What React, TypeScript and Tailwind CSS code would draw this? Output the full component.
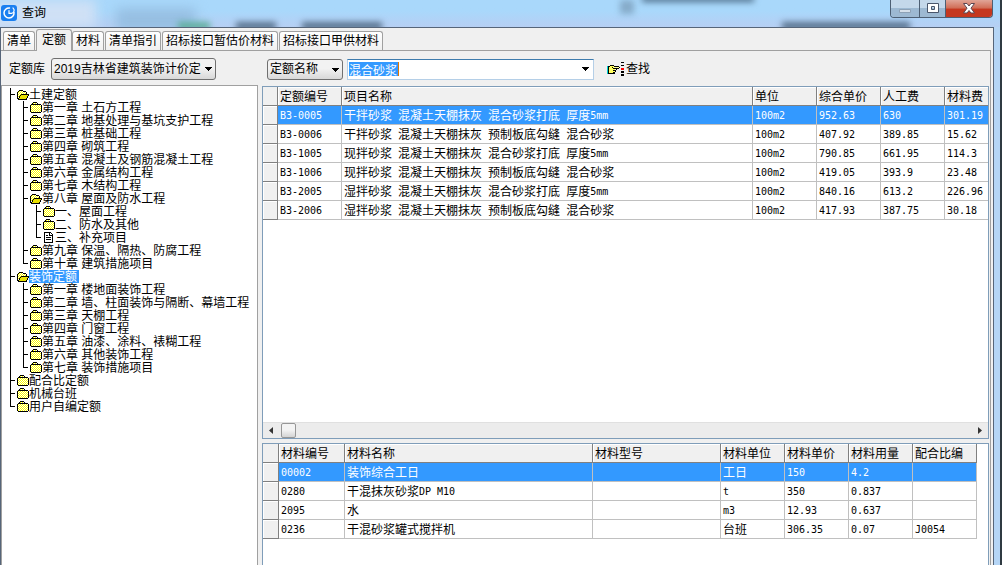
import React, { useState } from "react";

type Guide = "tee" | "elbow" | "bar";
type IconKind = "closed" | "open" | "page";
type Node = { guides: Guide[]; icon: IconKind; label: string; selected?: boolean };

const T: Guide = "tee";
const E: Guide = "elbow";
const B: Guide = "bar";

const nodes: Node[] = [
  { guides: [T], icon: "open", label: "土建定额" },
  { guides: [B, T], icon: "closed", label: "第一章 土石方工程" },
  { guides: [B, T], icon: "closed", label: "第二章 地基处理与基坑支护工程" },
  { guides: [B, T], icon: "closed", label: "第三章 桩基础工程" },
  { guides: [B, T], icon: "closed", label: "第四章 砌筑工程" },
  { guides: [B, T], icon: "closed", label: "第五章 混凝土及钢筋混凝土工程" },
  { guides: [B, T], icon: "closed", label: "第六章 金属结构工程" },
  { guides: [B, T], icon: "closed", label: "第七章 木结构工程" },
  { guides: [B, T], icon: "open", label: "第八章 屋面及防水工程" },
  { guides: [B, B, T], icon: "closed", label: "一、屋面工程" },
  { guides: [B, B, T], icon: "closed", label: "二、防水及其他" },
  { guides: [B, B, E], icon: "page", label: "三、补充项目" },
  { guides: [B, T], icon: "closed", label: "第九章 保温、隔热、防腐工程" },
  { guides: [B, E], icon: "closed", label: "第十章 建筑措施项目" },
  { guides: [T], icon: "open", label: "装饰定额", selected: true },
  { guides: [B, T], icon: "closed", label: "第一章 楼地面装饰工程" },
  { guides: [B, T], icon: "closed", label: "第二章 墙、柱面装饰与隔断、幕墙工程" },
  { guides: [B, T], icon: "closed", label: "第三章 天棚工程" },
  { guides: [B, T], icon: "closed", label: "第四章 门窗工程" },
  { guides: [B, T], icon: "closed", label: "第五章 油漆、涂料、裱糊工程" },
  { guides: [B, T], icon: "closed", label: "第六章 其他装饰工程" },
  { guides: [B, E], icon: "closed", label: "第七章 装饰措施项目" },
  { guides: [T], icon: "closed", label: "配合比定额" },
  { guides: [T], icon: "closed", label: "机械台班" },
  { guides: [E], icon: "closed", label: "用户自编定额" },
];

const quotas = [
  ["B3-0005", "干拌砂浆 混凝土天棚抹灰 混合砂浆打底 厚度5mm", "100m2", "952.63", "630", "301.19"],
  ["B3-0006", "干拌砂浆 混凝土天棚抹灰 预制板底勾缝 混合砂浆", "100m2", "407.92", "389.85", "15.62"],
  ["B3-1005", "现拌砂浆 混凝土天棚抹灰 混合砂浆打底 厚度5mm", "100m2", "790.85", "661.95", "114.3"],
  ["B3-1006", "现拌砂浆 混凝土天棚抹灰 预制板底勾缝 混合砂浆", "100m2", "419.05", "393.9", "23.48"],
  ["B3-2005", "湿拌砂浆 混凝土天棚抹灰 混合砂浆打底 厚度5mm", "100m2", "840.16", "613.2", "226.96"],
  ["B3-2006", "湿拌砂浆 混凝土天棚抹灰 预制板底勾缝 混合砂浆", "100m2", "417.93", "387.75", "30.18"],
];

const materials = [
  ["00002", "装饰综合工日", "", "工日", "150", "4.2", ""],
  ["0280", "干混抹灰砂浆DP M10", "", "t", "350", "0.837", ""],
  ["2095", "水", "", "m3", "12.93", "0.637", ""],
  ["0236", "干混砂浆罐式搅拌机", "", "台班", "306.35", "0.07", "J0054"],
];

const tabs = ["清单", "定额", "材料", "清单指引", "招标接口暂估价材料", "招标接口甲供材料"];

function GuideCell({ kind }: { kind: Guide }) {
  const d = {
    tee: "M6 0h1v13h-1zM6 6h5v1h-5z",
    elbow: "M6 0h1v7h-1zM6 6h5v1h-5z",
    bar: "M6 0h1v13h-1z",
  }[kind];
  return (
    <svg className="h-[13px] w-[13px] shrink-0" viewBox="0 0 13 13" shapeRendering="crispEdges" aria-hidden="true">
      <path d={d} fill="#000" />
    </svg>
  );
}

function TreeIcon({ kind }: { kind: IconKind }) {
  return (
    <svg className="h-[13px] w-3 shrink-0" viewBox="0 0 12 13" shapeRendering="crispEdges" aria-hidden="true">
      {kind === "closed" && (
        <>
          <path d="M1 4h10v7H1zM3 2h4v2H3z" fill="url(#dither)" />
          <path d="M3 1h4v1H3zM2 2h1v1H2zM7 2h1v1H7zM1 3h10v1H1zM0 4h1v7H0zM1 11h10v1H1zM11 4h1v7h-1z" fill="#000" />
        </>
      )}
      {kind === "open" && (
        <>
          <path d="M1 3h8v8H1z" fill="url(#dither)" />
          <path d="M4 6h8v1h-1v2h-1v2H2V9h1V8h1z" fill="#e8e000" />
          <path d="M2 2h4v1H2zM1 3h1v1H1zM6 3h3v1H6zM0 4h1v7H0zM9 4h1v2H9zM4 6h8v1H4zM3 7h1v1H3zM11 7h1v1h-1zM2 8h1v2H2zM10 8h1v2h-1zM1 10h1v1H1zM9 10h1v1H9zM1 11h9v1H1z" fill="#000" />
        </>
      )}
      {kind === "page" && (
        <path d="M2 1h5v1H2zM1 1h1v11H1zM1 11h9v1H1zM9 4h1v8H9zM7 1h1v1H7zM8 2h1v1H8zM9 3h1v1H9zM6 2h1v3H6zM6 4h3v1H6zM3 4h2v1H3zM3 6h5v1H3zM3 8h5v1H3z" fill="#000" />
      )}
    </svg>
  );
}

function DownArrow() {
  return (
    <svg className="h-1 w-[7px]" viewBox="0 0 7 4" shapeRendering="crispEdges" aria-hidden="true">
      <path d="M0 0h7v1H0zM1 1h5v1H1zM2 2h3v1H2zM3 3h1v1H3z" fill="#000" />
    </svg>
  );
}

/* Half-width runs are set in a monospaced face, half as wide as the Chinese characters. */
function Mixed({ text }: { text: string }) {
  return (
    <>
      {text.split(/([\x20-\x7e]+)/).map((part, i) =>
        i % 2 ? (
          <span key={i} className="align-[1px] font-['DejaVu_Sans_Mono',monospace] text-[10px] leading-[12px] whitespace-pre">
            {part}
          </span>
        ) : (
          part
        ),
      )}
    </>
  );
}

function Grid({
  label,
  heads,
  rows,
  widths,
  clipped,
}: {
  label: string;
  heads: string[];
  rows: string[][];
  widths: string[];
  clipped?: boolean;
}) {
  const edge = clipped ? "last:border-r-0" : "";
  const [active, setActive] = useState(0);
  return (
    <table className="w-full table-fixed border-separate border-spacing-0 text-left" aria-label={label}>
      <colgroup>
        {widths.map((w, i) => (
          <col key={i} className={w} />
        ))}
      </colgroup>
      <thead>
        <tr className="h-[19px]">
          <td className="border-r border-b border-[#808080] bg-[#f0f0f0] p-0" />
          {heads.map((h) => (
            <th
              key={h}
              scope="col"
              className={`overflow-hidden border-r border-b border-[#808080] bg-[#f0f0f0] p-0 pt-[2px] pl-[2px] font-normal whitespace-nowrap shadow-[inset_1px_1px_0_#ffffff] ${edge}`}
            >
              {h}
            </th>
          ))}
        </tr>
      </thead>
      <tbody>
        {rows.map((r, i) => (
          <tr key={r[0]} className={`h-[19px] ${i === active ? "bg-[#3399ff] text-white" : "bg-white"}`} onClick={() => setActive(i)}>
            <td className="border-r border-b border-[#808080] bg-[#f0f0f0] p-0 shadow-[inset_1px_1px_0_#ffffff]" />
            {r.map((c, j) => (
              <td key={j} className={`overflow-hidden border-r border-b border-[#c0c0c0] p-0 pt-[2px] pl-[2px] whitespace-nowrap ${edge}`}>
                <Mixed text={c} />
              </td>
            ))}
          </tr>
        ))}
      </tbody>
    </table>
  );
}

function TitleBar() {
  return (
    <header className="relative flex h-[27px] shrink-0 items-start justify-between overflow-hidden bg-gradient-to-b from-[#a9d8fb] from-40% to-[#b6cff3]">
      <div className="absolute top-0 -left-4 h-7 w-28 bg-[#cfe0f5] blur-[6px]" />
      <div className="absolute top-2 left-[116px] h-6 w-20 bg-[#96bfe2] blur-[6px]" />
      <div className="absolute top-[22px] left-[178px] h-2 w-8 bg-[#5fae9c] blur-[3px]" />
      <div className="absolute top-[22px] left-[236px] h-2 w-10 bg-[#56718c] blur-[3px]" />
      <div className="absolute top-[22px] left-[302px] h-2 w-20 bg-[#56718c] blur-[3px]" />
      <div className="absolute top-0 left-[620px] h-3.5 w-3.5 bg-[#86abc9] blur-[3px]" />
      <div className="absolute -top-1 left-[642px] h-1.5 w-28 bg-[#4f6f8b] blur-[3px]" />
      <div className="absolute top-[22px] right-[90px] h-2 w-32 bg-[#56718c] blur-[3px]" />
      <div className="relative flex items-center gap-1 pt-[5px] pl-px">
        <svg className="h-4 w-4" viewBox="0 0 16 16" aria-hidden="true">
          <rect width="16" height="16" rx="3" fill="#1a7ff0" />
          <path d="M8.500 3A5 5 0 1 0 13 7.500" fill="none" stroke="#fff" strokeWidth="1.5" strokeLinecap="round" />
          <path d="M8 5.500v2.800h2.500A3 3 0 0 0 13 4.500L12 3" fill="none" stroke="#fff" strokeWidth="1.2" strokeLinecap="round" />
        </svg>
        <h1 className="pl-px">查询</h1>
      </div>
      <div className="relative mr-[7px] flex h-[18px] overflow-hidden rounded-b-[4px] border border-t-0 border-[#4d5f73]">
        <button aria-label="最小化" className="flex w-7 items-center justify-center bg-gradient-to-b from-[#c4d8ea] from-45% to-[#9db9d2] to-50%">
          <svg className="mt-1 h-1 w-3" viewBox="0 0 12 4"><path d="M.5.5h11v3H.5z" fill="#d5e0ea" stroke="#8ea2b6" /></svg>
        </button>
        <button aria-label="最大化" className="flex w-[27px] items-center justify-center border-x border-[#4d5f73] bg-gradient-to-b from-[#c4d8ea] from-45% to-[#9db9d2] to-50%">
          <svg className="h-[11px] w-3" viewBox="0 0 12 11"><path d="M.5.5h11v9H.5zM4.500 3.500h3v3h-3z" fill="#fff" fillRule="evenodd" stroke="#49566b" /></svg>
        </button>
        <button aria-label="关闭" className="flex w-[46px] items-center justify-center bg-gradient-to-b from-[#e0a597] via-[#d17059] via-45% to-[#c5381f] to-55%">
          <svg className="h-[11px] w-3" viewBox="0 0 12 11"><path d="M.5.5h3.500L6 3 8 .5h3.500L8 5.200l3.500 4.800H8L6 7.500 4 10H.5L4 5.200z" fill="#fff" stroke="#5b4652" /></svg>
        </button>
      </div>
    </header>
  );
}

export default function App() {
  const [tab, setTab] = useState("定额");
  return (
    <div className="flex h-screen bg-[#2f3a42] pr-[2px] font-['Liberation_Sans','Noto_Sans_CJK_SC',sans-serif] text-[12px] leading-[16px] text-black">
      <svg className="absolute h-0 w-0" aria-hidden="true">
        <defs>
          <pattern id="dither" width="2" height="2" patternUnits="userSpaceOnUse">
            <path d="M0 0h2v2H0z" fill="#ffff00" />
            <path d="M0 0h1v1H0zM1 1h1v1H1z" fill="#ffffff" />
          </pattern>
        </defs>
      </svg>
      <div className="flex min-w-0 flex-1 flex-col bg-[#b5d5f5]">
        <TitleBar />
        <main className="mr-[6px] flex min-h-0 flex-1 flex-col border-x border-t border-[#566579] bg-[#f0f0f0]">
          <div role="tablist" className="relative z-10 flex h-[22px] shrink-0 items-end pl-[2px]">
            {tabs.map((t) => (
              <button
                key={t}
                role="tab"
                aria-selected={t === tab}
                onClick={() => setTab(t)}
                className={
                  t === tab
                    ? "-mb-px h-[22px] rounded-t-[3px] border border-b-0 border-[#a0a0a0] bg-[#f0f0f0] px-[5px] pb-[2px] whitespace-nowrap"
                    : "mr-px h-[19px] rounded-t-[3px] border border-b-0 border-[#a0a0a0] bg-gradient-to-b from-white to-[#f0f0f0] px-[3px] whitespace-nowrap"
                }
              >
                {t}
              </button>
            ))}
          </div>
          <div className="mr-[2px] flex min-h-0 flex-1 flex-col border-t border-r border-[#a0a0a0]">
            <div className="flex h-[34px] shrink-0 items-center pt-[2px] pl-[8px]">
              <div className="flex w-[258px] shrink-0 items-center gap-[6px]">
                <label htmlFor="library">定额库</label>
                <div className="relative">
                  <select
                    id="library"
                    className="h-[22px] w-[165px] appearance-none rounded-[3px] border border-[#707070] bg-gradient-to-b from-[#f2f2f2] from-45% to-[#d8d8d8] pr-[13px] pl-[2px]"
                  >
                    <option>2019吉林省建筑装饰计价定</option>
                  </select>
                  <span className="pointer-events-none absolute top-[9px] right-1 flex"><DownArrow /></span>
                </div>
              </div>
              <div className="relative">
                <select
                  aria-label="查询字段"
                  className="h-[21px] w-[76px] appearance-none rounded-[3px] border border-[#707070] bg-gradient-to-b from-[#f2f2f2] from-45% to-[#d8d8d8] pr-4 pl-[2px]"
                >
                  <option>定额名称</option>
                </select>
                <span className="pointer-events-none absolute top-[9px] right-1 flex"><DownArrow /></span>
              </div>
              <div className="relative ml-1 flex h-[21px] w-[247px] items-center border border-[#b5cfe7] border-t-[#3d7bad] bg-white">
                <span className="pointer-events-none absolute left-px h-[14px] w-[50px] border-r border-[#e07800] bg-[#3399ff]" />
                <input
                  aria-label="查询内容"
                  defaultValue="混合砂浆"
                  className="relative h-full min-w-0 flex-1 bg-transparent pl-px text-white outline-none"
                />
                <span className="mr-1 flex"><DownArrow /></span>
              </div>
              <button className="ml-[13px] flex items-center gap-[2px]">
                <svg className="h-[14px] w-[17px]" viewBox="0 0 17 14" shapeRendering="crispEdges" aria-hidden="true">
                  <path d="M2 4h6v7H2z" fill="#ffff60" />
                  <path d="M7 5h5v1H7z" fill="#ffff9c" />
                  <path d="M0 4h1v8H0z" fill="#00d0d0" />
                  <path d="M1 4h1v8H1zM2 4h1v1H2zM3 3h4v1H3zM7 4h5v1H7zM12 5h1v1h-1zM6 6h6v1H6zM9 7h1v1H9zM6 8h3v1H6zM8 9h1v1H8zM6 10h2v1H6zM2 11h6v1H2zM5 5h1v1H5z" fill="#000" />
                  <path d="M14 0h3v1h-3zM14 3h3v1h-3zM14 9h3v2h-3zM14 12h3v2h-3z" fill="#000" />
                  <path d="M14 6h3v2h-3z" fill="#ff0000" />
                </svg>
                <span>查找</span>
              </button>
            </div>
            <div className="flex min-h-0 flex-1 gap-[4px]">
              <ul className="w-[257px] shrink-0 overflow-hidden border border-b-0 border-[#a0a0a0] bg-white pt-[2px] pl-[2px]" aria-label="定额目录">
                {nodes.map((n, i) => (
                  <li key={i} className="flex h-[13px] items-start">
                    {n.guides.map((g, j) => (
                      <GuideCell key={j} kind={g} />
                    ))}
                    <TreeIcon kind={n.icon} />
                    <span
                      className={
                        n.selected
                          ? "h-[13px] bg-[#3399ff] pr-[2px] leading-[15px] whitespace-nowrap text-white"
                          : "h-[13px] leading-[15px] whitespace-nowrap"
                      }
                    >
                      {n.label}
                    </span>
                  </li>
                ))}
              </ul>
              <div className="flex min-w-0 flex-1 flex-col gap-[4px] pt-px pr-px">
                <section className="flex h-[353px] shrink-0 flex-col border border-[#7f9db9] bg-white">
                  <div className="min-h-0 flex-1">
                    <Grid
                      clipped
                      label="定额列表"
                      heads={["定额编号", "项目名称", "单位", "综合单价", "人工费", "材料费"]}
                      rows={quotas}
                      widths={["w-[15px]", "w-[64px]", "w-auto", "w-[64px]", "w-[64px]", "w-[64px]", "w-[43px]"]}
                    />
                  </div>
                  <div className="flex h-[16px] items-center border-t border-[#e0e0e0] bg-[#ececec] px-[6px]">
                    <button aria-label="向左滚动" className="flex h-full w-3 items-center">
                      <svg className="h-[7px] w-1" viewBox="0 0 4 7"><path d="M4 0v7L0 3.500z" fill="#333" /></svg>
                    </button>
                    <span className="h-[15px] w-[15px] rounded-[2px] border border-[#979797] bg-gradient-to-b from-[#f4f4f4] from-45% to-[#d4d4d4]" />
                    <button aria-label="向右滚动" className="ml-auto flex h-full w-3 items-center justify-end">
                      <svg className="h-[7px] w-1" viewBox="0 0 4 7"><path d="M0 0v7l4-3.500z" fill="#333" /></svg>
                    </button>
                  </div>
                </section>
                <section className="min-h-0 flex-1 overflow-hidden border border-b-0 border-[#7f9db9] bg-white pr-[11px]">
                  <Grid
                    label="材料列表"
                    heads={["材料编号", "材料名称", "材料型号", "材料单位", "材料单价", "材料用量", "配合比编"]}
                    rows={materials}
                    widths={["w-[16px]", "w-[66px]", "w-auto", "w-[128px]", "w-[64px]", "w-[64px]", "w-[64px]", "w-[64px]"]}
                  />
                </section>
              </div>
            </div>
          </div>
        </main>
      </div>
    </div>
  );
}
